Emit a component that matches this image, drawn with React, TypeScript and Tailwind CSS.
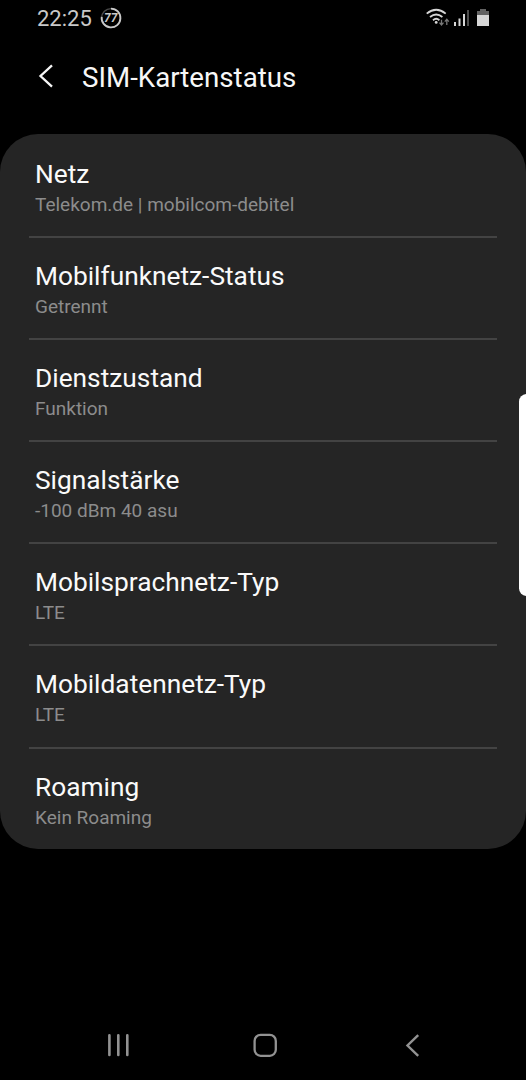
import React from "react";

type StatusEntry = {
  title: string;
  value: string;
};

const entries: StatusEntry[] = [
  { title: "Netz", value: "Telekom.de | mobilcom-debitel" },
  { title: "Mobilfunknetz-Status", value: "Getrennt" },
  { title: "Dienstzustand", value: "Funktion" },
  { title: "Signalstärke", value: "-100 dBm 40 asu" },
  { title: "Mobilsprachnetz-Typ", value: "LTE" },
  { title: "Mobildatennetz-Typ", value: "LTE" },
  { title: "Roaming", value: "Kein Roaming" },
];

function StatusBar() {
  return (
    <div className="flex h-9 items-center justify-between pl-[37px] pr-[36px] text-[#c9c9c9]">
      <div className="flex items-center gap-[8px]">
        <span className="pt-[2px] text-[22px] leading-[34px]">22:25</span>
        <div className="relative flex size-[22px] items-center justify-center">
          <svg className="absolute inset-0" width="22" height="22" viewBox="0 0 22 22" fill="none">
            <circle cx="11" cy="11" r="9.4" stroke="#4a4a4a" strokeWidth="1.4" />
            <path d="M11 1.6A9.4 9.4 0 1 1 1.7 9.8" stroke="#c9c9c9" strokeWidth="1.8" />
          </svg>
          <span className="text-[12px] font-bold italic leading-none">77</span>
        </div>
      </div>
      <div className="flex items-center">
        <svg width="64" height="22" viewBox="426 7 64 22" fill="none">
          <g stroke="#d6d6d6" strokeWidth="1.8">
            <path d="M426.7 13.6Q436.2 5.9 445.7 13.6" />
            <path d="M430 17Q436.2 11.9 442.4 17" />
            <path d="M433 20.2Q436.2 17.4 439.4 20.2" />
          </g>
          <circle cx="436.2" cy="22.4" r="1.4" fill="#d6d6d6" />
          <path d="M441.5 19.8V24M439.5 22.6l2 2.4 2-2.4M446.8 25v-4.5M444.8 21.6l2-2.4 2 2.4" stroke="#777" strokeWidth="1.3" />
          <g fill="#d6d6d6">
            <rect x="454" y="22" width="2" height="4" />
            <rect x="458.5" y="18.5" width="2" height="7.5" />
            <rect x="463" y="14" width="2" height="12" />
            <rect x="467" y="10" width="2" height="16" fill="#4d4d4d" />
          </g>
          <path d="M480 9h6v2h3v5h-12v-5h3z" fill="#626262" />
          <rect x="477" y="15" width="12" height="11" fill="#d6d6d6" />
        </svg>
      </div>
    </div>
  );
}

function Header() {
  return (
    <header className="flex h-[98px] items-start pl-[38px] pt-[22px]">
      <svg className="mt-[6px]" width="16" height="24" viewBox="0 0 16 24" fill="none">
        <path d="M14 1.4L2.5 12L14 22.6" stroke="#f5f5f5" strokeWidth="2.3" />
      </svg>
      <h1 className="ml-[28px] text-[27.7px] leading-[40px] text-[#f7f7f7]">SIM-Kartenstatus</h1>
    </header>
  );
}

function StatusRow({ title, value }: StatusEntry) {
  return (
    <li className="mx-[29px] h-[102.1px] border-b-2 border-[#434343] pl-[6px] pt-[22px] last:border-b-0">
      <div className="text-[26.3px] leading-8 text-[#fafafa]">{title}</div>
      <div className="mt-[3px] text-[19px] leading-6 text-[#8c8c8c]">{value}</div>
    </li>
  );
}

function NavigationBar() {
  return (
    <nav className="flex h-[70px] items-center pl-[106px]">
      <svg width="24" height="24" viewBox="0 0 24 24" fill="none">
        <path d="M3.4 2.3v19.6M12.3 2.3v19.6M21.3 2.3v19.6" stroke="#929292" strokeWidth="2.6" strokeLinecap="round" />
      </svg>
      <svg className="ml-[123px]" width="24" height="24" viewBox="0 0 24 24" fill="none">
        <rect x="1.6" y="1.9" width="21.2" height="20.9" rx="6" stroke="#929292" strokeWidth="2.3" />
      </svg>
      <svg className="ml-[128px]" width="16" height="24" viewBox="0 0 16 24" fill="none">
        <path d="M13.2 2.2L2.5 12.5L13.2 22.8" stroke="#929292" strokeWidth="2.4" />
      </svg>
    </nav>
  );
}

export default function App() {
  return (
    <div className="relative flex h-[1080px] w-[526px] flex-col overflow-hidden bg-black font-['Roboto',sans-serif]">
      <StatusBar />
      <Header />
      <ul className="h-[715px] rounded-[38px] bg-[#252525] pt-[2px]">
        {entries.map((entry) => (
          <StatusRow key={entry.title} title={entry.title} value={entry.value} />
        ))}
      </ul>
      <div className="mt-auto">
        <NavigationBar />
      </div>
      {/* edge panel handle */}
      <div className="absolute -right-2 top-[394px] h-[202px] w-[15px] rounded-[8px] bg-white" />
    </div>
  );
}
